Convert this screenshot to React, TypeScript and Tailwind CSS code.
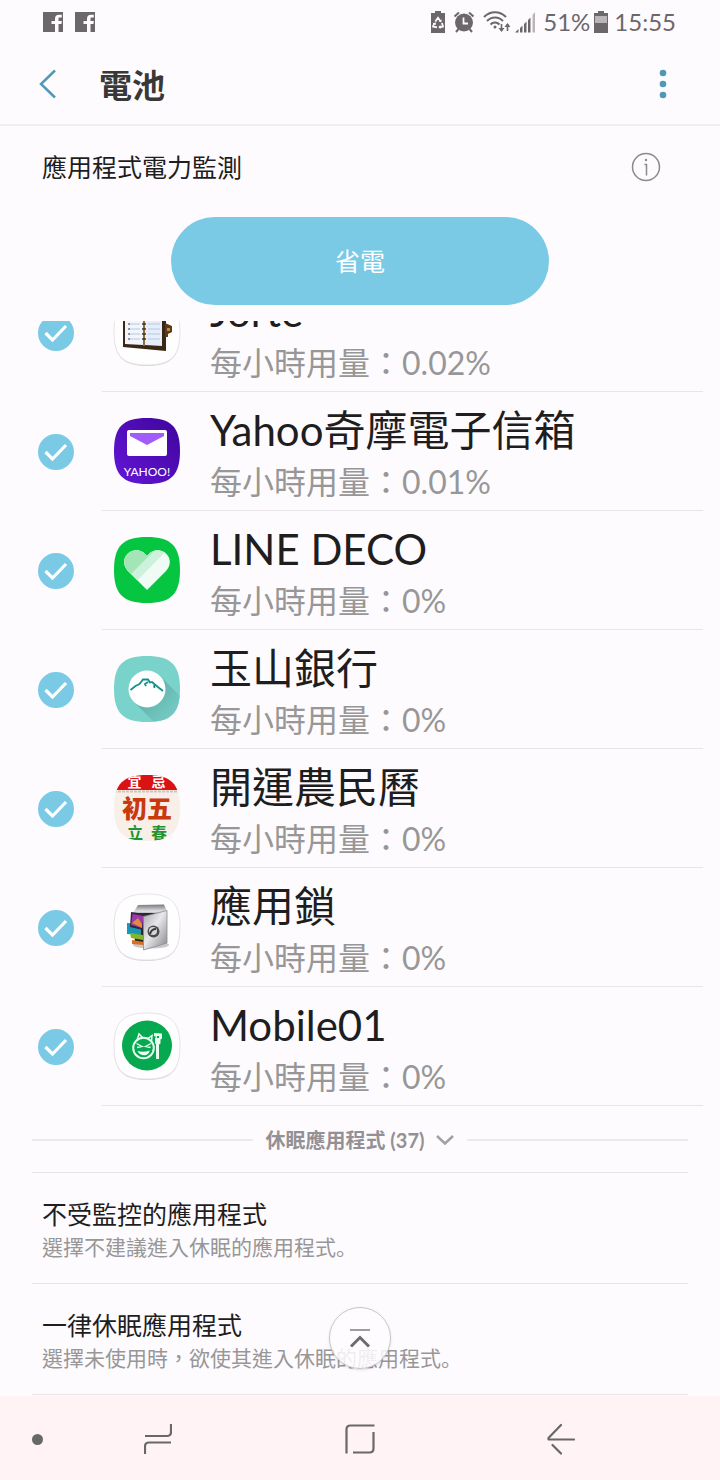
import React from "react";

const SQUIRCLE = "M33 0C57 0 66 9 66 33S57 66 33 66 0 57 0 33 9 0 33 0Z";

function FacebookIcon() {
  return (
    <svg viewBox="0 0 20 20" className="size-5" aria-hidden="true">
      <path
        fill="#6b676b"
        d="M0 0h20v20h-4.500v-8h3l.3-3h-3.300V6.800c0-.8.4-1.200 1.300-1.200h2V2.800h-2.800c-2.600 0-4 1.600-4 4V9H8.500v3h3.500v8H0z"
      />
    </svg>
  );
}

function StatusIcons() {
  return (
    <>
      <svg viewBox="0 0 16 22" className="h-[22px] w-4" aria-hidden="true">
        <path fill="#6b676b" d="M5 0h6v2h4v20H1V2h4z" />
        <path
          fill="none"
          stroke="#fefbff"
          strokeWidth="1.800"
          d="M5.300 10.500 8 6.800l2.500 3.400M12 12l1 3.500-3.500.8M7 16.300l-4-.8L4.400 12"
        />
        <path fill="#fefbff" d="m11.800 8.500-.6 3-2.600-1.400zM10.500 14v4l-2.200-2zM2.700 12.600l3-1.400.4 2.800z" />
      </svg>
      <svg viewBox="0 0 22 22" className="ml-[7px] size-[22px]" aria-hidden="true">
        <circle cx="11" cy="11.500" r="9" fill="#6b676b" />
        <path stroke="#6b676b" strokeWidth="2" fill="none" d="M1.500 5.500 6 1.500M20.500 5.500 16 1.500M5.500 18 3 21M16.500 18l2.500 3" />
        <path stroke="#fefbff" strokeWidth="1.800" fill="none" d="M10.500 6.500v6H15" />
      </svg>
      <svg viewBox="0 0 28 22" className="ml-2 h-[22px] w-7" fill="none" stroke="#6b676b" aria-hidden="true">
        <path strokeWidth="2" d="M1 6C7-.5 17-.5 23 6M4 10c4.500-4.800 11.500-4.800 16 0M7.500 13.500c2.500-2.700 6.500-2.700 9 0" />
        <circle cx="12" cy="16" r="1.500" fill="#6b676b" stroke="none" />
        <path strokeWidth="1.600" d="M18.500 13v7M24.500 20v-7" />
        <path fill="#6b676b" stroke="none" d="M15.500 17h6l-3 4zM21.500 16h6l-3-4z" />
      </svg>
      <svg viewBox="0 0 22 22" className="ml-1 size-[22px]" aria-hidden="true">
        <path fill="#6b676b" d="M0 21.500 3.500 18v3.500zM5 17l2.500-2.500v7H5zM9 13l2.500-2.500v11H9zM13 9l2.500-2.500v15H13z" />
        <path fill="#b9b6b9" d="M17.500 4 20 1v20.500h-2.500z" />
      </svg>
    </>
  );
}

function BatteryIcon() {
  return (
    <svg viewBox="0 0 14 22" className="h-[22px] w-[14px]" aria-hidden="true">
      <path fill="#6b676b" d="M4 0h6v2h4v20H0V2h4z" />
      <path fill="#b9b6b9" d="M1 5h12v7H1z" />
    </svg>
  );
}

function WhiteTile({ children }: { children: React.ReactNode }) {
  return (
    <svg viewBox="0 0 66 66" className="size-[66px] shrink-0 overflow-visible" aria-hidden="true">
      <path d={SQUIRCLE} fill="#d6d2d5" transform="translate(0 1)" />
      <path d={SQUIRCLE} fill="#fffeff" stroke="#e8e4e8" strokeWidth="1" />
      {children}
    </svg>
  );
}

function JorteIcon() {
  return (
    <WhiteTile>
      <path d="M9 12 52 10v42L9 48z" fill="#3b2716" />
      <path d="m51 24 7 3v6l-4 2v3h-3z" fill="#5b3a16" />
      <path d="M53 29h3v3h-3z" fill="#c48a3a" />
      <path d="m11 14 18 1v31l-18-1z" fill="#f2f5fb" />
      <path d="m31 15 17-2v34l-17-1z" fill="#e6eef9" />
      <path d="M15 20h11M15 25h11M15 30h11M15 35h11M15 40h11M34 20h12M34 25h12M34 30h12M34 35h12M34 40h12" stroke="#b4cae2" strokeWidth="1" />
      <path d="M30 14v33" stroke="#8a6a3a" strokeWidth="2" />
      <path d="M28 20h4M28 25h4M28 30h4M28 35h4M28 40h4" stroke="#4a3420" strokeWidth="1.500" />
      <path d="M14 25h2M14 30h2M14 35h2M14 40h2" stroke="#33445a" strokeWidth="1.200" />
    </WhiteTile>
  );
}

function YahooIcon() {
  return (
    <svg viewBox="0 0 66 66" className="size-[66px] shrink-0" aria-hidden="true">
      <defs>
        <linearGradient id="yahooFill" x1="0" y1="1" x2="1" y2="0">
          <stop offset="0" stopColor="#6417d8" />
          <stop offset="1" stopColor="#3f049b" />
        </linearGradient>
      </defs>
      <path d={SQUIRCLE} fill="url(#yahooFill)" />
      <rect x="13" y="12" width="40" height="26" rx="2" fill="#fff" />
      <path d="M16 15h34v3L33 27 16 18z" fill="#a25cfb" />
      <text x="33" y="58" textAnchor="middle" fontSize="12" fill="#fff" fontFamily="Lato, sans-serif">
        YAHOO!
      </text>
    </svg>
  );
}

function LineDecoIcon() {
  return (
    <svg viewBox="0 0 66 66" className="size-[66px] shrink-0" aria-hidden="true">
      <defs>
        <clipPath id="heart">
          <path d="M33 53 14 34C8.500 28 9.500 21 13.500 17c5-5 13-5 17.500 0l2 2 2-2c4.500-5 12.500-5 17.500 0 4 4 5 11-.500 17z" />
        </clipPath>
      </defs>
      <path d={SQUIRCLE} fill="#06c541" />
      <g clipPath="url(#heart)">
        <path d="M0 0h66v66H0z" fill="#f0fbf5" />
        <path d="M0 0h66L0 67z" fill="#cdf1da" />
        <path d="M0 0h54L0 54z" fill="#a3e5b6" />
      </g>
    </svg>
  );
}

function EsunIcon() {
  return (
    <svg viewBox="0 0 66 66" className="size-[66px] shrink-0" aria-hidden="true">
      <defs>
        <clipPath id="esunTile">
          <path d={SQUIRCLE} />
        </clipPath>
        <linearGradient id="esunShade" x1="0" y1="0" x2="1" y2="1">
          <stop offset=".4" stopColor="#64b5ae" />
          <stop offset="1" stopColor="#7ad3cb" />
        </linearGradient>
      </defs>
      <path d={SQUIRCLE} fill="#7ad3cb" />
      <path clipPath="url(#esunTile)" d="M46 20 66 40v26H40L20 46z" fill="url(#esunShade)" />
      <circle cx="33" cy="33" r="18.500" fill="#fff" />
      <path
        d="m16.500 34 5-4 4-2 3.500-4.500h5l2 3 2-.5 4 3.500 2.500 2 4.500 3.500M34 26l-3 2 1 2M40 29l.5 3"
        fill="none"
        stroke="#11918c"
        strokeWidth="1.800"
      />
    </svg>
  );
}

function AlmanacIcon() {
  const family = "'Noto Sans CJK TC', sans-serif";
  return (
    <svg viewBox="0 0 66 66" className="size-[66px] shrink-0" aria-hidden="true">
      <defs>
        <clipPath id="almanacTile">
          <path d={SQUIRCLE} />
        </clipPath>
      </defs>
      <g clipPath="url(#almanacTile)" fontFamily={family} fontWeight="700" textAnchor="middle">
        <path d="M0 0h66v66H0z" fill="#f8efe8" />
        <path d="M0 0h66v15H0z" fill="#da1214" />
        <path d="M0 16.500h66" stroke="#cfc4ba" strokeWidth="2" strokeDasharray="3 1" />
        <text x="20.500" y="12" fontSize="14" fill="#fff">宜</text>
        <text x="44.500" y="12" fontSize="14" fill="#fff">忌</text>
        <text x="33" y="43" fontSize="25" fontWeight="900" fill="#c8390c">初五</text>
        <text x="21" y="64" fontSize="16" fill="#1f9431">立</text>
        <text x="45" y="64" fontSize="16" fill="#1f9431">春</text>
      </g>
    </svg>
  );
}

function SafeIcon() {
  return (
    <WhiteTile>
      <defs>
        <linearGradient id="safeDoor" x1="0" y1="0" x2="1" y2="1">
          <stop offset="0" stopColor="#a9a9ac" />
          <stop offset=".45" stopColor="#e8e8ea" />
          <stop offset="1" stopColor="#85858a" />
        </linearGradient>
        <linearGradient id="safeTop" x1="0" y1="0" x2="0" y2="1">
          <stop offset="0" stopColor="#77777a" />
          <stop offset="1" stopColor="#e5e5e7" />
        </linearGradient>
      </defs>
      <ellipse cx="37" cy="51" rx="18" ry="3.500" fill="#c9c7ca" />
      <path d="m24 11 26-.5 3 7H20z" fill="url(#safeTop)" />
      <path d="M19.500 17.500H53V50l-33 1z" fill="#c5c5c9" />
      <path d="M21 19h27v29H21z" fill="#26262a" />
      <path d="m13 29 14 1v11l-14-1z" fill="#1897b4" />
      <path d="m17 18 14 2-2 16-13-3z" fill="#33263f" />
      <path d="m18.500 20 11 2-1.500 12-11-3z" fill="#9b3aa8" />
      <path d="m18 29 6-5 4 6v4z" fill="#e28a3d" />
      <path d="m16 39 13 2v5l-12-2z" fill="#86b52a" />
      <path d="m18 46 12 2v3l-12-1z" fill="#d96f22" />
      <path d="m29.500 22.500 23.500-6V49l-23.500 7z" fill="url(#safeDoor)" stroke="#8c8c90" strokeWidth=".8" />
      <circle cx="39.500" cy="37.500" r="6" fill="#4b4b4f" />
      <circle cx="39" cy="37" r="4" fill="#d7d7d9" />
      <path d="M36 40c1-4 3-5 6-5" stroke="#3c3c40" strokeWidth="2" fill="none" />
    </WhiteTile>
  );
}

function Mobile01Icon() {
  return (
    <WhiteTile>
      <circle cx="33" cy="32.500" r="25" fill="#06a94f" />
      <g fill="none" stroke="#e9fff2">
        <circle cx="29.500" cy="35" r="10.300" strokeWidth="2" />
        <path d="M23 27.500 25 21l4 4M34 25.500l4-3-.5 6" strokeWidth="1.500" />
        <path d="m22.500 30.500 5.500 3-5 1M37 30.500l-5.500 3 5 1" strokeWidth="1.300" />
      </g>
      <path d="M23.500 38c4 1 8 1 12-.5 0 5.500-9 7-12 .5z" fill="#e9fff2" />
      <path d="m40 20 8 .5v5l-1.500 1v4L45 31.500V46h-3V31.500l-1-1.500v-5l1.500-1-2.500-1z" fill="#e9fff2" />
      <path d="M43 23h2v2h-2z" fill="#06a94f" />
    </WhiteTile>
  );
}

const apps = [
  { name: "Jorte", usage: "0.02%", icon: <JorteIcon /> },
  { name: "Yahoo奇摩電子信箱", usage: "0.01%", icon: <YahooIcon /> },
  { name: "LINE DECO", usage: "0%", icon: <LineDecoIcon /> },
  { name: "玉山銀行", usage: "0%", icon: <EsunIcon /> },
  { name: "開運農民曆", usage: "0%", icon: <AlmanacIcon /> },
  { name: "應用鎖", usage: "0%", icon: <SafeIcon /> },
  { name: "Mobile01", usage: "0%", icon: <Mobile01Icon /> },
];

function AppRow({ name, usage, icon }: (typeof apps)[number]) {
  return (
    <li>
      <label className="flex h-[119px] items-stretch gap-7 pr-[17px] pl-[38px]">
        <span className="relative size-9 self-center">
          <input
            type="checkbox"
            defaultChecked
            className="peer block size-9 appearance-none rounded-full border-2 border-[#7acae6] checked:bg-[#7acae6]"
          />
          <svg
            viewBox="0 0 36 36"
            className="pointer-events-none absolute inset-0 hidden size-9 peer-checked:block"
            fill="none"
            stroke="#fff"
            strokeWidth="3.200"
            aria-hidden="true"
          >
            <path d="m7.500 18 7 7L28 11" />
          </svg>
        </span>
        <span className="flex min-w-0 flex-1 items-center gap-[30px] border-b border-[#e8e4e8] pl-3">
          {icon}
          <span className="flex min-w-0 flex-col pt-1.5">
            <span className="truncate text-[42px] leading-[56px] text-[#1e1e1e]">{name}</span>
            <span className="text-[32px] leading-[48px] whitespace-nowrap text-[#979797]">每小時用量：{usage}</span>
          </span>
        </span>
      </label>
    </li>
  );
}

function SettingRow({ title, detail }: { title: string; detail: string }) {
  return (
    <button type="button" className="flex h-[111px] flex-col justify-center border-b border-[#e8e4e8] px-[10px] text-left">
      <span className="pt-1 text-[25px] leading-8 text-[#1e1e1e]">{title}</span>
      <span className="text-[21px] leading-8 text-[#979797]">
        {detail}
        <span lang="ja" className="font-['Noto_Sans_CJK_JP',sans-serif]">。</span>
      </span>
    </button>
  );
}

export default function App() {
  return (
    <div className="flex min-h-screen flex-col bg-[#fefbff] font-['Lato','Noto_Sans_CJK_TC',sans-serif] text-[#1e1e1e]" lang="zh-Hant">
      <div className="flex h-11 items-center justify-between pr-11 pl-[43px] text-[#6b676b]">
        <div className="flex gap-3">
          <FacebookIcon />
          <FacebookIcon />
        </div>
        <div className="flex items-center">
          <StatusIcons />
          <span className="mr-1 ml-1.5 text-2xl">51%</span>
          <BatteryIcon />
          <span className="ml-1.5 text-2xl">15:55</span>
        </div>
      </div>

      <header className="flex h-[82px] items-center border-b-2 border-[#f0ecf0] pr-[45px] pl-[33px]">
        <button type="button" aria-label="返回" className="flex h-12 w-[66px] items-center">
          <svg viewBox="0 0 30 30" className="size-[30px]" fill="none" stroke="#5099b5" strokeWidth="2.500" aria-hidden="true">
            <path d="M22 1.500 8 15l14 13.500" />
          </svg>
        </button>
        <h1 className="flex-1 pt-0.5 text-[33px] leading-10 font-bold text-[#383838]">電池</h1>
        <button type="button" aria-label="更多選項" className="flex h-12 w-6 items-center justify-center">
          <svg viewBox="0 0 8 30" className="h-[30px] w-2" fill="#5099b5" aria-hidden="true">
            <circle cx="4" cy="4" r="3.300" />
            <circle cx="4" cy="15" r="3.300" />
            <circle cx="4" cy="26" r="3.300" />
          </svg>
        </button>
      </header>

      <main className="relative flex flex-1 flex-col">
        <section className="flex flex-col items-center pb-4">
          <div className="flex h-[82px] w-full items-center justify-between pr-[59px] pl-[42px]">
            <h2 className="text-[25px] leading-8">應用程式電力監測</h2>
            <button type="button" aria-label="資訊">
              <svg viewBox="0 0 30 30" className="size-[30px]" fill="none" stroke="#8c898c" strokeWidth="1.500" aria-hidden="true">
                <circle cx="15" cy="15" r="13.500" />
                <path d="M13.500 12.500H15.500v11" />
                <circle cx="15" cy="8" r="1.200" fill="#8c898c" stroke="none" />
              </svg>
            </button>
          </div>
          <button type="button" className="mt-[9px] h-[88px] w-[378px] rounded-full bg-[#7acae6] pt-0.5 text-[25px] text-white">
            省電
          </button>
        </section>

        <div className="overflow-hidden">
          <ul className="-mt-12">
            {apps.map((app) => (
              <AppRow key={app.name} {...app} />
            ))}
          </ul>
        </div>

        <div className="flex flex-col px-8">
          <button type="button" className="flex h-[67px] items-center gap-3 border-b border-[#e8e4e8] pt-0.5 text-[#949194]">
            <span className="h-0.5 flex-1 bg-[#ece8ec]" />
            <span className="flex items-center gap-[10px] text-xl font-bold">
              休眠應用程式 (37)
              <svg viewBox="0 0 20 12" className="h-3 w-5" fill="none" stroke="#a3a0a3" strokeWidth="2.500" aria-hidden="true">
                <path d="m2 2 8 7.500L18 2" />
              </svg>
            </span>
            <span className="h-0.5 flex-1 bg-[#ece8ec]" />
          </button>
          <SettingRow title="不受監控的應用程式" detail="選擇不建議進入休眠的應用程式" />
          <SettingRow title="一律休眠應用程式" detail="選擇未使用時，欲使其進入休眠的應用程式" />
        </div>

        <button
          type="button"
          aria-label="回到頂端"
          className="absolute bottom-[27px] left-1/2 flex size-[62px] -translate-x-1/2 items-center justify-center rounded-full border border-[#c9c5c9] bg-[#fefbff]/85 shadow-sm"
        >
          <svg viewBox="0 0 22 22" className="size-[22px]" fill="none" aria-hidden="true">
            <path d="M1 3h20" stroke="#a09da0" strokeWidth="2" />
            <path d="m2 19.500 9-9 9 9" stroke="#6f6c6f" strokeWidth="3" />
          </svg>
        </button>
      </main>

      <nav className="flex h-[84px] items-center bg-[#fff3f6] pt-0.5 pr-[58px] pl-8">
        <button type="button" aria-label="隱藏導覽列" className="mr-[13px] flex h-12 w-3 items-center">
          <span className="size-[11px] rounded-full bg-[#686868]" />
        </button>
        <button type="button" aria-label="最近使用" className="flex h-full flex-1 items-center justify-center">
          <svg viewBox="0 0 28 32" className="h-8 w-7" fill="none" stroke="#686868" strokeWidth="2.200" aria-hidden="true">
            <path d="M1 13h22q4 0 4-4V1M27 19.500H5q-4 0-4 4V31" />
          </svg>
        </button>
        <button type="button" aria-label="首頁" className="flex h-full flex-1 items-center justify-center">
          <svg viewBox="0 0 30 30" className="size-[30px]" fill="none" stroke="#686868" strokeWidth="2.200" aria-hidden="true">
            <path d="M1.500 29.500V5.500q0-4 4-4h24M28.500 8v16.500q0 4-4 4H8" />
          </svg>
        </button>
        <button type="button" aria-label="上一頁" className="flex h-full flex-1 items-center justify-center">
          <svg viewBox="0 0 28 32" className="h-8 w-7" fill="none" stroke="#686868" strokeWidth="2.200" strokeLinecap="round" strokeLinejoin="round" aria-hidden="true">
            <path d="M14 2 1.500 15v1.500H27M5.500 22l8.500 8.500" />
          </svg>
        </button>
      </nav>
    </div>
  );
}
